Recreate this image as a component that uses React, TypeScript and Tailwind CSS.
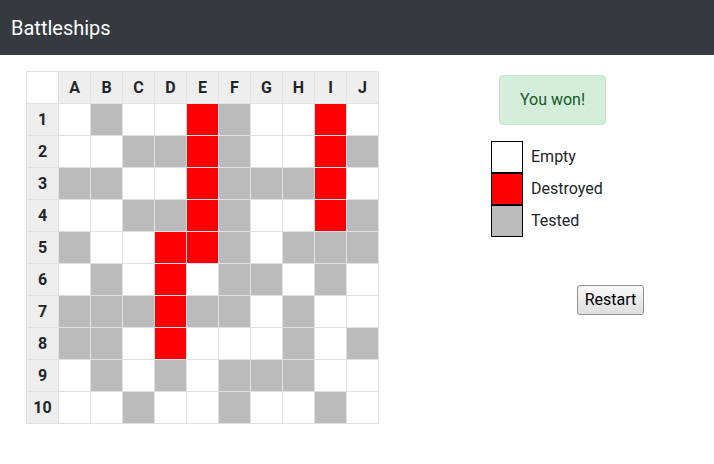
import React from "react";

const G = "g", R = "r", W = "w";
const rows: string[][] = [
  [W, G, W, W, R, G, W, W, R, W],
  [W, W, G, G, R, G, W, W, R, G],
  [G, G, W, W, R, G, G, G, R, W],
  [W, W, G, G, R, G, W, W, R, G],
  [G, W, W, R, R, G, W, G, G, G],
  [W, G, W, R, W, G, G, W, G, W],
  [G, G, G, R, G, G, W, G, W, W],
  [G, G, W, R, W, W, W, G, W, G],
  [W, G, W, G, W, G, G, G, W, W],
  [W, W, G, W, W, G, W, W, G, W],
];
const cols = ["A", "B", "C", "D", "E", "F", "G", "H", "I", "J"];

function cellClass(v: string) {
  if (v === R) return "bg-[#ff0000]";
  if (v === G) return "bg-[#bbbbbb]";
  return "bg-white";
}

export default function App() {
  return (
    <div className="w-[714px] h-[464px] bg-white text-[#212529]" style={{ fontFamily: "Roboto, 'Noto Sans', sans-serif" }}>
      <div className="h-[55px] bg-[#343a40] flex items-center px-[11px] text-white text-[20px]">Battleships</div>
      <div className="flex pt-[16px] pl-[26px]">
        <div className="grid grid-cols-[repeat(11,31px)] auto-rows-[31px] gap-px p-px bg-[#dee2e6] w-[353px]">
          <div className="bg-white" />
          {cols.map((c) => (
            <div key={c} className="bg-[#eeeeee] flex items-center justify-center font-bold text-[16px]">{c}</div>
          ))}
          {rows.map((r, i) => (
            <React.Fragment key={i}>
              <div className="bg-[#eeeeee] flex items-center justify-center font-bold text-[16px]">{i + 1}</div>
              {r.map((v, j) => (
                <div key={j} className={cellClass(v)} />
              ))}
            </React.Fragment>
          ))}
        </div>
        <div className="ml-[112px] flex flex-col items-start">
          <div className="mt-[4px] ml-[8px] w-[107px] h-[50px] rounded-[4px] border border-[#c3e6cb] bg-[#d4edda] text-[#155724] text-[16px] flex items-center justify-center">
            You won!
          </div>
          <div className="mt-[16px] flex flex-col">
            {[
              ["bg-white", "Empty"],
              ["bg-[#ff0000]", "Destroyed"],
              ["bg-[#bbbbbb]", "Tested"],
            ].map(([bg, label]) => (
              <div key={label} className="flex items-center h-[32px]">
                <div className={`w-[32px] h-[32px] border border-black ${bg}`} />
                <span className="ml-[8px] text-[16px]">{label}</span>
              </div>
            ))}
          </div>
          <button className="mt-[48px] ml-[86px] w-[67px] h-[30px] rounded-[3px] border border-[#8f8f8f] bg-gradient-to-b from-[#f8f8f8] to-[#dedede] text-[16px] text-black flex items-center justify-center">
            Restart
          </button>
        </div>
      </div>
    </div>
  );
}
